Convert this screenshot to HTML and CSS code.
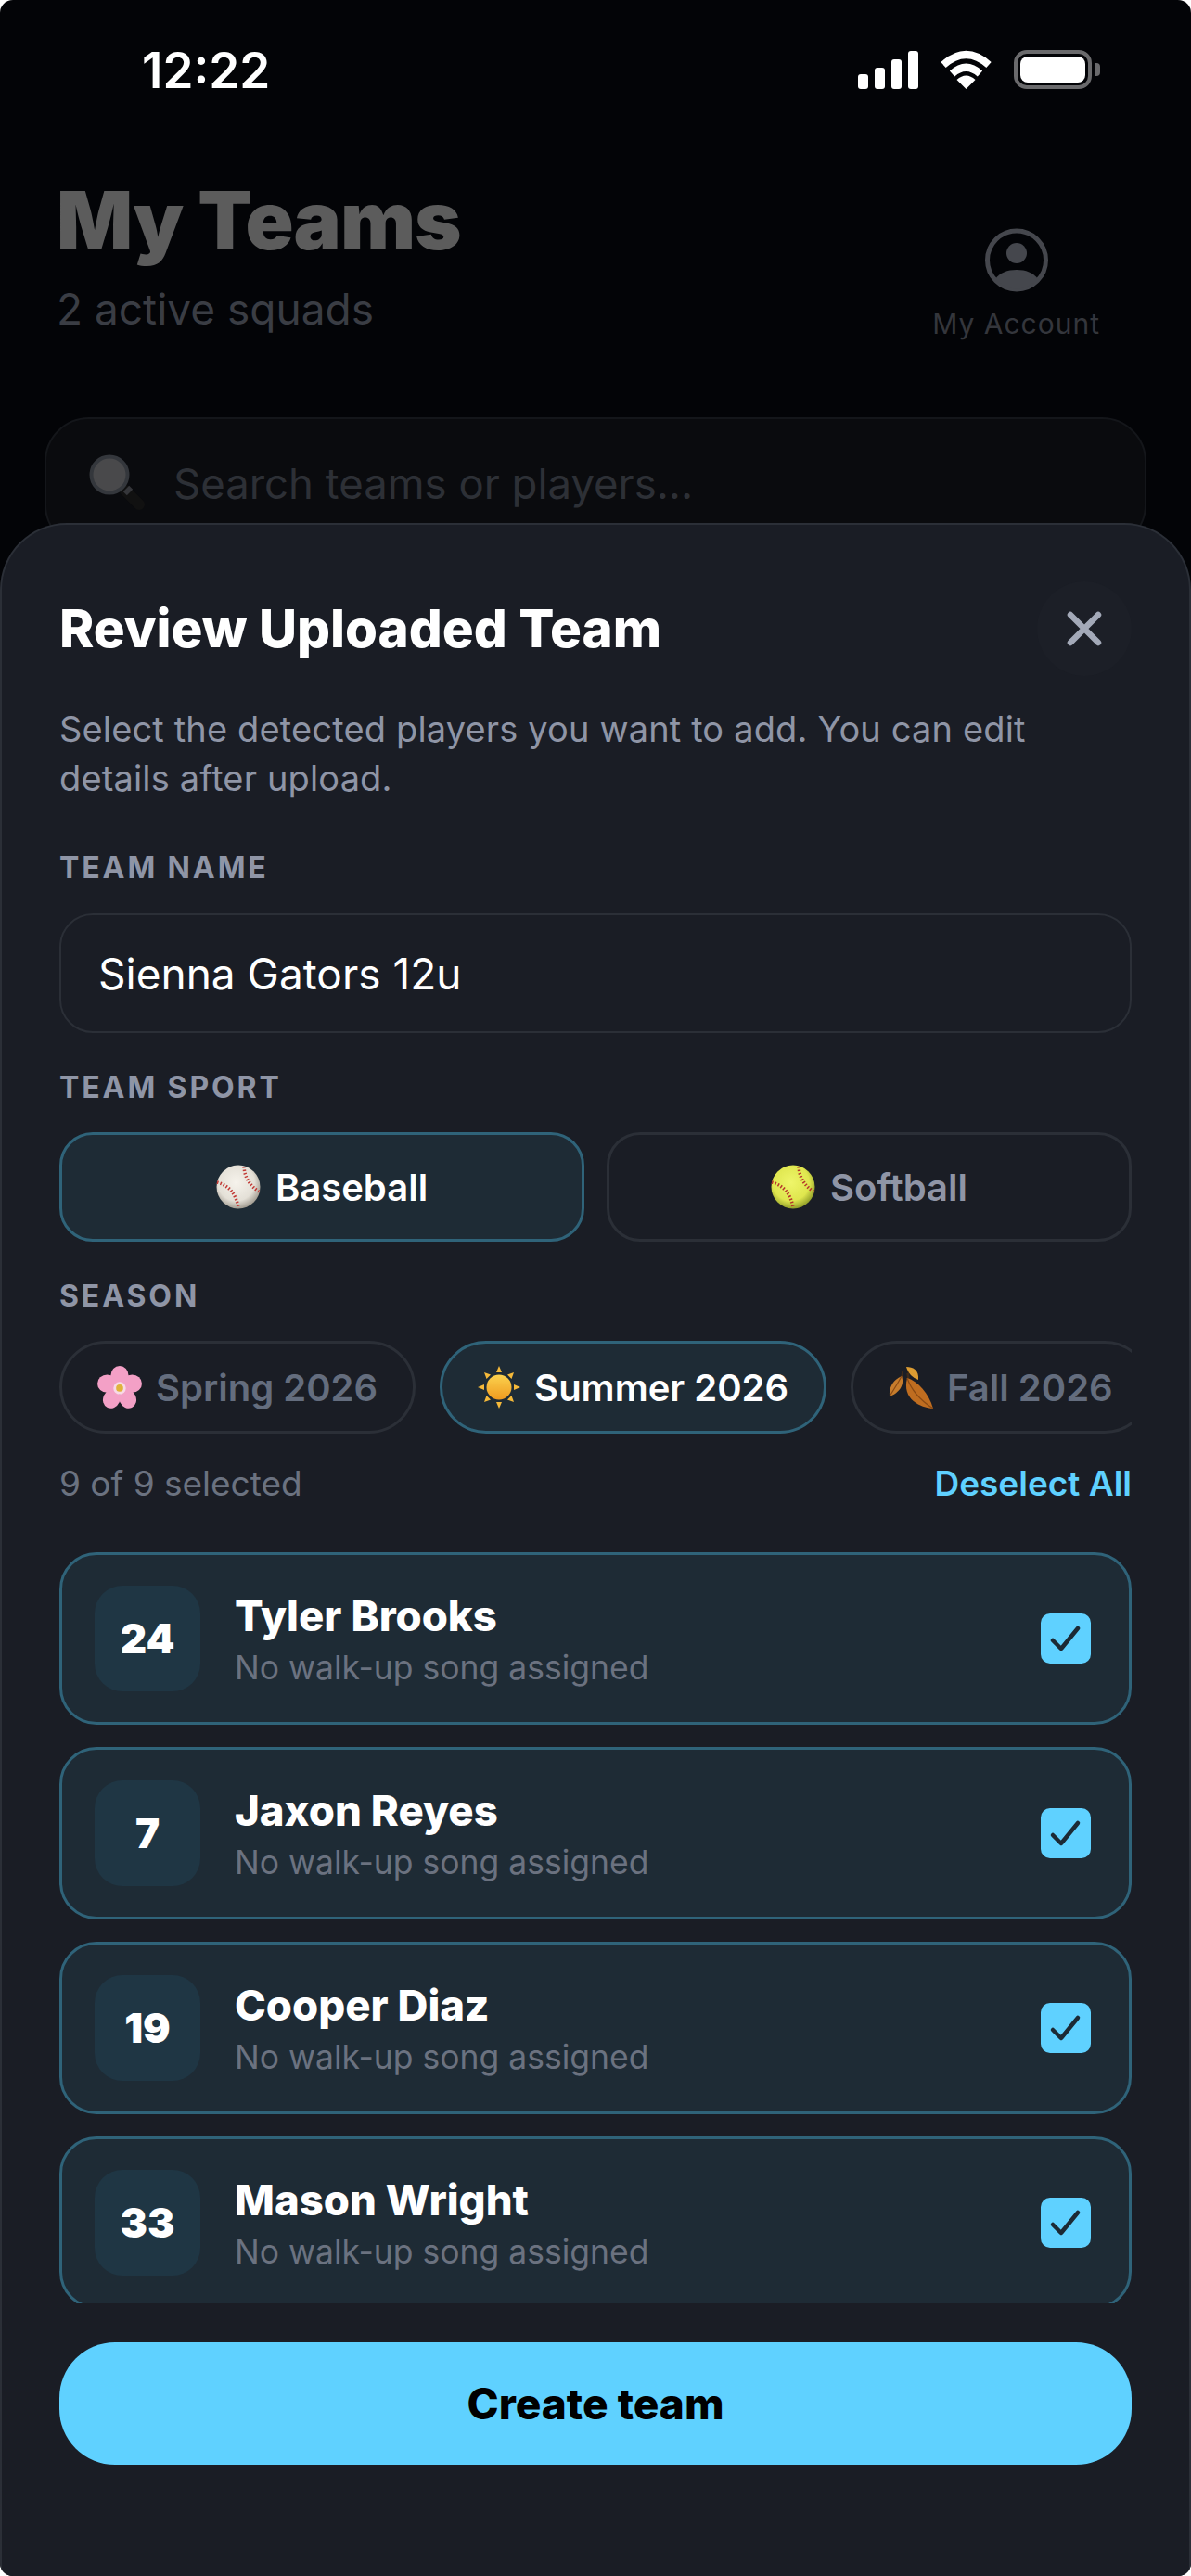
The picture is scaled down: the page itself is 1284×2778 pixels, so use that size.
FILE: index.html
```html
<!DOCTYPE html>
<html>

<head>
    <title>My Teams</title>
    <link rel="stylesheet" href="styles.css">
</head>

<body>
    <div class="screen">
        <div class="status-bar">
            <span class="status-time">12:22</span>
            <div class="status-icons">
                <div class="signal">
                    <span class="bar bar-1"></span>
                    <span class="bar bar-2"></span>
                    <span class="bar bar-3"></span>
                    <span class="bar bar-4"></span>
                </div>
                <svg class="wifi" width="57" height="42" viewBox="0 0 57 42">
                    <path d="M4 16 Q28.5 -6 53 16" fill="none" stroke="#fff" stroke-width="8" />
                    <path d="M13.5 25.5 Q28.5 12 43.5 25.5" fill="none" stroke="#fff" stroke-width="8" />
                    <path d="M28.5 42 L18.5 32 Q28.5 23 38.5 32 Z" fill="#fff" />
                </svg>
                <div class="battery">
                    <span class="battery-fill"></span>
                </div>
                <span class="battery-nub"></span>
            </div>
        </div>

        <div class="team-header">
            <div>
                <h1 class="page-title">My Teams</h1>
                <div class="page-sub">2 active squads</div>
            </div>
            <div class="account">
                <svg width="68" height="69" viewBox="0 0 68 69">
                    <circle cx="34" cy="34.5" r="31.5" fill="none" stroke="#45474d" stroke-width="5" />
                    <circle cx="34" cy="27" r="11" fill="#45474d" />
                    <path d="M11 55 C16 48 24 45 34 45 C44 45 52 48 57 55 A 31 31 0 0 1 11 55 Z" fill="#45474d" />
                </svg>
                <span class="account-label">My Account</span>
            </div>
        </div>

        <div class="search">
            <svg class="search-icon" width="62" height="62" viewBox="0 0 62 62">
                <path d="M40 39 L55 54" stroke="#111" stroke-width="12" stroke-linecap="round" />
                <path d="M41 37 L45 41" stroke="#35363a" stroke-width="9" />
                <circle cx="23" cy="22" r="19.5" fill="#49494b" stroke="#34373c" stroke-width="4" />
            </svg>
            <span class="search-text">Search teams or players...</span>
        </div>

        <div class="sheet">
            <div class="sheet-head">
                <h2 class="sheet-title">Review Uploaded Team</h2>
                <div class="close-btn">
                    <svg width="40" height="40" viewBox="0 0 40 40">
                        <path d="M5 5 L35 35 M35 5 L5 35" stroke="#a3a9b8" stroke-width="6.5" stroke-linecap="round" />
                    </svg>
                </div>
            </div>
            <p class="sheet-desc">Select the detected players you want to add. You can edit details after upload.</p>

            <div class="field-label first">TEAM NAME</div>
            <div class="text-input">Sienna Gators 12u</div>

            <div class="field-label">TEAM SPORT</div>
            <div class="sport-row">
                <div class="sport-btn active">
                    <svg width="48" height="48" viewBox="0 0 48 48">
                        <circle cx="24" cy="24" r="23.5" fill="url(#ballWhite)" />
                        <path d="M30 2 Q31 19 46 29" fill="none" stroke="#c23a36" stroke-width="3.5" stroke-dasharray="1.5 2" />
                        <path d="M1 19 Q20 24 24 46" fill="none" stroke="#c23a36" stroke-width="3.5" stroke-dasharray="1.5 2" />
                    </svg>
                    <span>Baseball</span>
                </div>
                <div class="sport-btn">
                    <svg width="48" height="48" viewBox="0 0 48 48">
                        <circle cx="24" cy="24" r="23.5" fill="url(#ballYellow)" />
                        <path d="M30 2 Q31 19 46 29" fill="none" stroke="#b5372c" stroke-width="3.5" stroke-dasharray="1.5 2" />
                        <path d="M1 19 Q20 24 24 46" fill="none" stroke="#b5372c" stroke-width="3.5" stroke-dasharray="1.5 2" />
                    </svg>
                    <span>Softball</span>
                </div>
            </div>

            <div class="field-label">SEASON</div>
            <div class="season-row">
                <div class="season-pill">
                    <svg width="48" height="48" viewBox="0 0 50 48">
                        <g fill="#f3a0c6">
                            <ellipse cx="25" cy="11" rx="10" ry="11" />
                            <ellipse cx="39" cy="20" rx="11" ry="10" />
                            <ellipse cx="34" cy="37" rx="9.5" ry="11" transform="rotate(-25 34 37)" />
                            <ellipse cx="16" cy="37" rx="9.5" ry="11" transform="rotate(25 16 37)" />
                            <ellipse cx="11" cy="20" rx="11" ry="10" />
                        </g>
                        <circle cx="25" cy="25" r="7" fill="#f8d9e6" />
                        <circle cx="25" cy="25" r="4" fill="#e0b33c" />
                    </svg>
                    <span>Spring 2026</span>
                </div>
                <div class="season-pill active">
                    <svg width="46" height="46" viewBox="0 0 46 46">
                        <g fill="#f5b93a">
                            <path d="M23 0 L26 7 L20 7 Z" />
                            <path d="M23 46 L26 39 L20 39 Z" />
                            <path d="M0 23 L7 20 L7 26 Z" />
                            <path d="M46 23 L39 20 L39 26 Z" />
                            <path d="M7 7 L14 9.500 L9.500 14 Z" />
                            <path d="M39 7 L32 9.500 L36.500 14 Z" />
                            <path d="M7 39 L14 36.500 L9.500 32 Z" />
                            <path d="M39 39 L32 36.500 L36.500 32 Z" />
                        </g>
                        <circle cx="23" cy="23" r="13.500" fill="url(#sunFill)" />
                    </svg>
                    <span>Summer 2026</span>
                </div>
                <div class="season-pill">
                    <svg width="48" height="45" viewBox="0 0 48 45">
                        <path d="M15 4 L14 12 M21 2 L22 14 M20 7 L21 14" stroke="#3c2a1a" stroke-width="1.500" fill="none" />
                        <path d="M14 10 C5 14 0 22 1 32 C10 29 18 20 14 10 Z" fill="#c67c2c" />
                        <path d="M19 0 C26 0 33 3 32 14 C26 12 21 7 19 0 Z" fill="#dc9c32" />
                        <path d="M20 12 C32 16 43 28 48 45 C34 44 14 35 20 12 Z" fill="#bf6d20" />
                        <path d="M20 12 C24 24 34 36 48 45 M14 10 C10 18 5 25 1 32" stroke="#8a4a14" stroke-width="1.200" fill="none" />
                    </svg>
                    <span>Fall 2026</span>
                </div>
            </div>

            <div class="count-row">
                <span class="count-text">9 of 9 selected</span>
                <span class="deselect">Deselect All</span>
            </div>

            <div class="player-list">
                <div class="player-card">
                    <div class="player-num">24</div>
                    <div class="player-info">
                        <div class="player-name">Tyler Brooks</div>
                        <div class="player-song">No walk-up song assigned</div>
                    </div>
                    <div class="check"><svg width="54" height="54" viewBox="0 0 54 54"><path d="M13 29 L22 38 L40 16" fill="none" stroke="#1c2a35" stroke-width="4.500" stroke-linecap="round" stroke-linejoin="round" /></svg></div>
                </div>
                <div class="player-card">
                    <div class="player-num">7</div>
                    <div class="player-info">
                        <div class="player-name">Jaxon Reyes</div>
                        <div class="player-song">No walk-up song assigned</div>
                    </div>
                    <div class="check"><svg width="54" height="54" viewBox="0 0 54 54"><path d="M13 29 L22 38 L40 16" fill="none" stroke="#1c2a35" stroke-width="4.500" stroke-linecap="round" stroke-linejoin="round" /></svg></div>
                </div>
                <div class="player-card">
                    <div class="player-num">19</div>
                    <div class="player-info">
                        <div class="player-name">Cooper Diaz</div>
                        <div class="player-song">No walk-up song assigned</div>
                    </div>
                    <div class="check"><svg width="54" height="54" viewBox="0 0 54 54"><path d="M13 29 L22 38 L40 16" fill="none" stroke="#1c2a35" stroke-width="4.500" stroke-linecap="round" stroke-linejoin="round" /></svg></div>
                </div>
                <div class="player-card">
                    <div class="player-num">33</div>
                    <div class="player-info">
                        <div class="player-name">Mason Wright</div>
                        <div class="player-song">No walk-up song assigned</div>
                    </div>
                    <div class="check"><svg width="54" height="54" viewBox="0 0 54 54"><path d="M13 29 L22 38 L40 16" fill="none" stroke="#1c2a35" stroke-width="4.500" stroke-linecap="round" stroke-linejoin="round" /></svg></div>
                </div>
            </div>

            <div class="create-btn">Create team</div>
        </div>
    </div>

    <svg width="0" height="0" class="svg-defs">
        <defs>
            <radialGradient id="ballWhite" cx="45%" cy="40%" r="60%">
                <stop offset="0%" stop-color="#f6f3ec" />
                <stop offset="70%" stop-color="#e4e0d7" />
                <stop offset="100%" stop-color="#a39d92" />
            </radialGradient>
            <radialGradient id="ballYellow" cx="45%" cy="40%" r="60%">
                <stop offset="0%" stop-color="#eef56a" />
                <stop offset="70%" stop-color="#dfe64e" />
                <stop offset="100%" stop-color="#93a02a" />
            </radialGradient>
            <linearGradient id="sunFill" x1="0" y1="0" x2="0" y2="1">
                <stop offset="0%" stop-color="#fbd24e" />
                <stop offset="100%" stop-color="#ef9a1f" />
            </linearGradient>
        </defs>
    </svg>
</body>

</html>
```

FILE: styles.css
```css
body {
    margin: 0;
    background-color: #fff;
    font-family: "Inter", "Liberation Sans", sans-serif;
}

h1, h2, p {
    margin: 0;
}

.svg-defs {
    position: absolute;
}

.screen {
    position: relative;
    width: 1284px;
    height: 2778px;
    border-radius: 14px;
    overflow: hidden;
    background-color: #030407;
}

/* status bar */
.status-bar {
    height: 150px;
    display: flex;
    justify-content: space-between;
    align-items: center;
    padding-left: 153px;
    padding-right: 98px;
}

.status-time {
    padding-top: 2px;
    color: #fff;
    font-size: 53px;
    font-weight: 600;
}

.status-icons {
    display: flex;
    align-items: center;
}

.signal {
    display: flex;
    align-items: flex-end;
    gap: 7px;
    height: 42px;
    margin-right: 23px;
}

.bar {
    width: 11px;
    border-radius: 3px;
    background-color: #fff;
}

.bar-1 { height: 16px; }
.bar-2 { height: 23px; }
.bar-3 { height: 32px; }
.bar-4 { height: 41px; }

.wifi {
    margin-right: 23px;
}

.battery {
    width: 84px;
    height: 42px;
    box-sizing: border-box;
    padding: 3px;
    border: 4px solid #6a6a6c;
    border-radius: 14px;
}

.battery-fill {
    display: block;
    height: 100%;
    border-radius: 8px;
    background-color: #fff;
}

.battery-nub {
    width: 5px;
    height: 14px;
    margin-left: 4px;
    border-radius: 0 4px 4px 0;
    background-color: #6a6a6c;
}

/* dimmed page behind the sheet */
.team-header {
    display: flex;
    justify-content: space-between;
    align-items: flex-end;
    margin-top: 40px;
    padding-left: 61px;
    padding-right: 98px;
}

.page-title {
    font-size: 86px;
    line-height: 96px;
    font-weight: 900;
    letter-spacing: -1px;
    color: #5c5c5c;
}

.page-sub {
    margin-top: 17px;
    padding-bottom: 6px;
    font-size: 46px;
    line-height: 60px;
    color: #3a3d44;
}

.account {
    display: flex;
    flex-direction: column;
    align-items: center;
    gap: 14px;
}

.account-label {
    font-size: 30px;
    line-height: 40px;
    letter-spacing: 1px;
    color: #34363c;
}

.search {
    display: flex;
    align-items: center;
    box-sizing: border-box;
    width: 1188px;
    height: 142px;
    margin-top: 81px;
    margin-left: 48px;
    padding-left: 45px;
    border: 2px solid #14161a;
    border-radius: 48px;
    background-color: #0a0b0e;
}

.search-icon {
    margin-right: 30px;
}

.search-text {
    font-size: 45.5px;
    color: #2d3036;
}

/* bottom sheet */
.sheet {
    position: absolute;
    top: 564px;
    left: 0;
    right: 0;
    bottom: 0;
    box-sizing: border-box;
    padding: 61px 64px 0;
    border-top: 2px solid #2b2f37;
    border-left: 2px solid #2b2f37;
    border-right: 2px solid #2b2f37;
    border-radius: 72px 72px 0 0;
    background-color: #1a1d25;
}

.sheet-head {
    display: flex;
    justify-content: space-between;
    align-items: center;
    height: 102px;
    margin-left: -2px;
    margin-right: -2px;
}

.sheet-title {
    padding-bottom: 2px;
    font-size: 56.5px;
    font-weight: 800;
    color: #fff;
}

.close-btn {
    display: flex;
    justify-content: center;
    align-items: center;
    width: 102px;
    height: 102px;
    border-radius: 50%;
    background-color: #1c1f27;
}

.sheet-desc {
    margin: 31px -2px 0;
    font-size: 38px;
    line-height: 53px;
    letter-spacing: 0.15px;
    color: #8f95a6;
}

.field-label {
    margin: 39px -2px 28px;
    font-size: 32px;
    line-height: 40px;
    font-weight: 700;
    letter-spacing: 2.9px;
    color: #8f95a6;
}

.field-label.first {
    margin-top: 50px;
    margin-bottom: 29px;
}

.text-input {
    display: flex;
    align-items: center;
    box-sizing: border-box;
    height: 129px;
    margin: 0 -2px;
    padding-left: 40px;
    border: 2px solid #2b2f37;
    border-radius: 36px;
    font-size: 46px;
    color: #fff;
}

.sport-row {
    display: flex;
    gap: 24px;
    margin: 0 -2px;
}

.sport-btn {
    flex: 1;
    display: flex;
    justify-content: center;
    align-items: center;
    gap: 16px;
    box-sizing: border-box;
    height: 118px;
    border: 3px solid #2b2f37;
    border-radius: 36px;
    font-size: 40px;
    font-weight: 600;
    color: #8f95a6;
}

.sport-btn.active {
    border-color: #2f6379;
    background-color: #1e2b35;
    color: #fff;
}

.season-row {
    display: flex;
    gap: 26px;
    margin: 0 -2px;
    overflow: hidden;
}

.season-pill {
    flex-shrink: 0;
    display: flex;
    align-items: center;
    gap: 15px;
    box-sizing: border-box;
    height: 100px;
    padding: 0 38px;
    border: 3px solid #2b2f37;
    border-radius: 50px;
    font-size: 40px;
    font-weight: 600;
    color: #646d7e;
}

.season-pill.active {
    border-color: #2f6379;
    background-color: #1e2b35;
    color: #fff;
}

.count-row {
    display: flex;
    justify-content: space-between;
    align-items: center;
    height: 44px;
    margin: 31px -2px 0;
    font-size: 37px;
}

.count-text {
    color: #6b7280;
}

.deselect {
    font-weight: 600;
    color: #5fd1ff;
}

.player-list {
    display: flex;
    flex-direction: column;
    gap: 24px;
    height: 810px;
    margin: 53px -2px 0;
    overflow: hidden;
}

.player-card {
    flex-shrink: 0;
    display: flex;
    align-items: center;
    box-sizing: border-box;
    height: 186px;
    padding-left: 35px;
    padding-right: 41px;
    border: 3px solid #2f6379;
    border-radius: 40px;
    background-color: #1e2b35;
}

.player-num {
    display: flex;
    justify-content: center;
    align-items: center;
    width: 114px;
    height: 114px;
    border-radius: 30px;
    background-color: #1f3644;
    font-size: 44px;
    font-weight: 900;
    color: #fff;
}

.player-info {
    flex: 1;
    margin-left: 37px;
    padding-top: 6px;
}

.player-name {
    font-size: 45.5px;
    line-height: 56px;
    font-weight: 800;
    color: #fff;
}

.player-song {
    font-size: 35.5px;
    line-height: 55px;
    color: #6b7280;
}

.check {
    width: 54px;
    height: 54px;
    border-radius: 10px;
    background-color: #5fd1ff;
}

.create-btn {
    display: flex;
    justify-content: center;
    align-items: center;
    height: 132px;
    margin: 42px -2px 0;
    border-radius: 60px;
    background-color: #5fd1ff;
    font-size: 46px;
    font-weight: 800;
    color: #000;
}
```
